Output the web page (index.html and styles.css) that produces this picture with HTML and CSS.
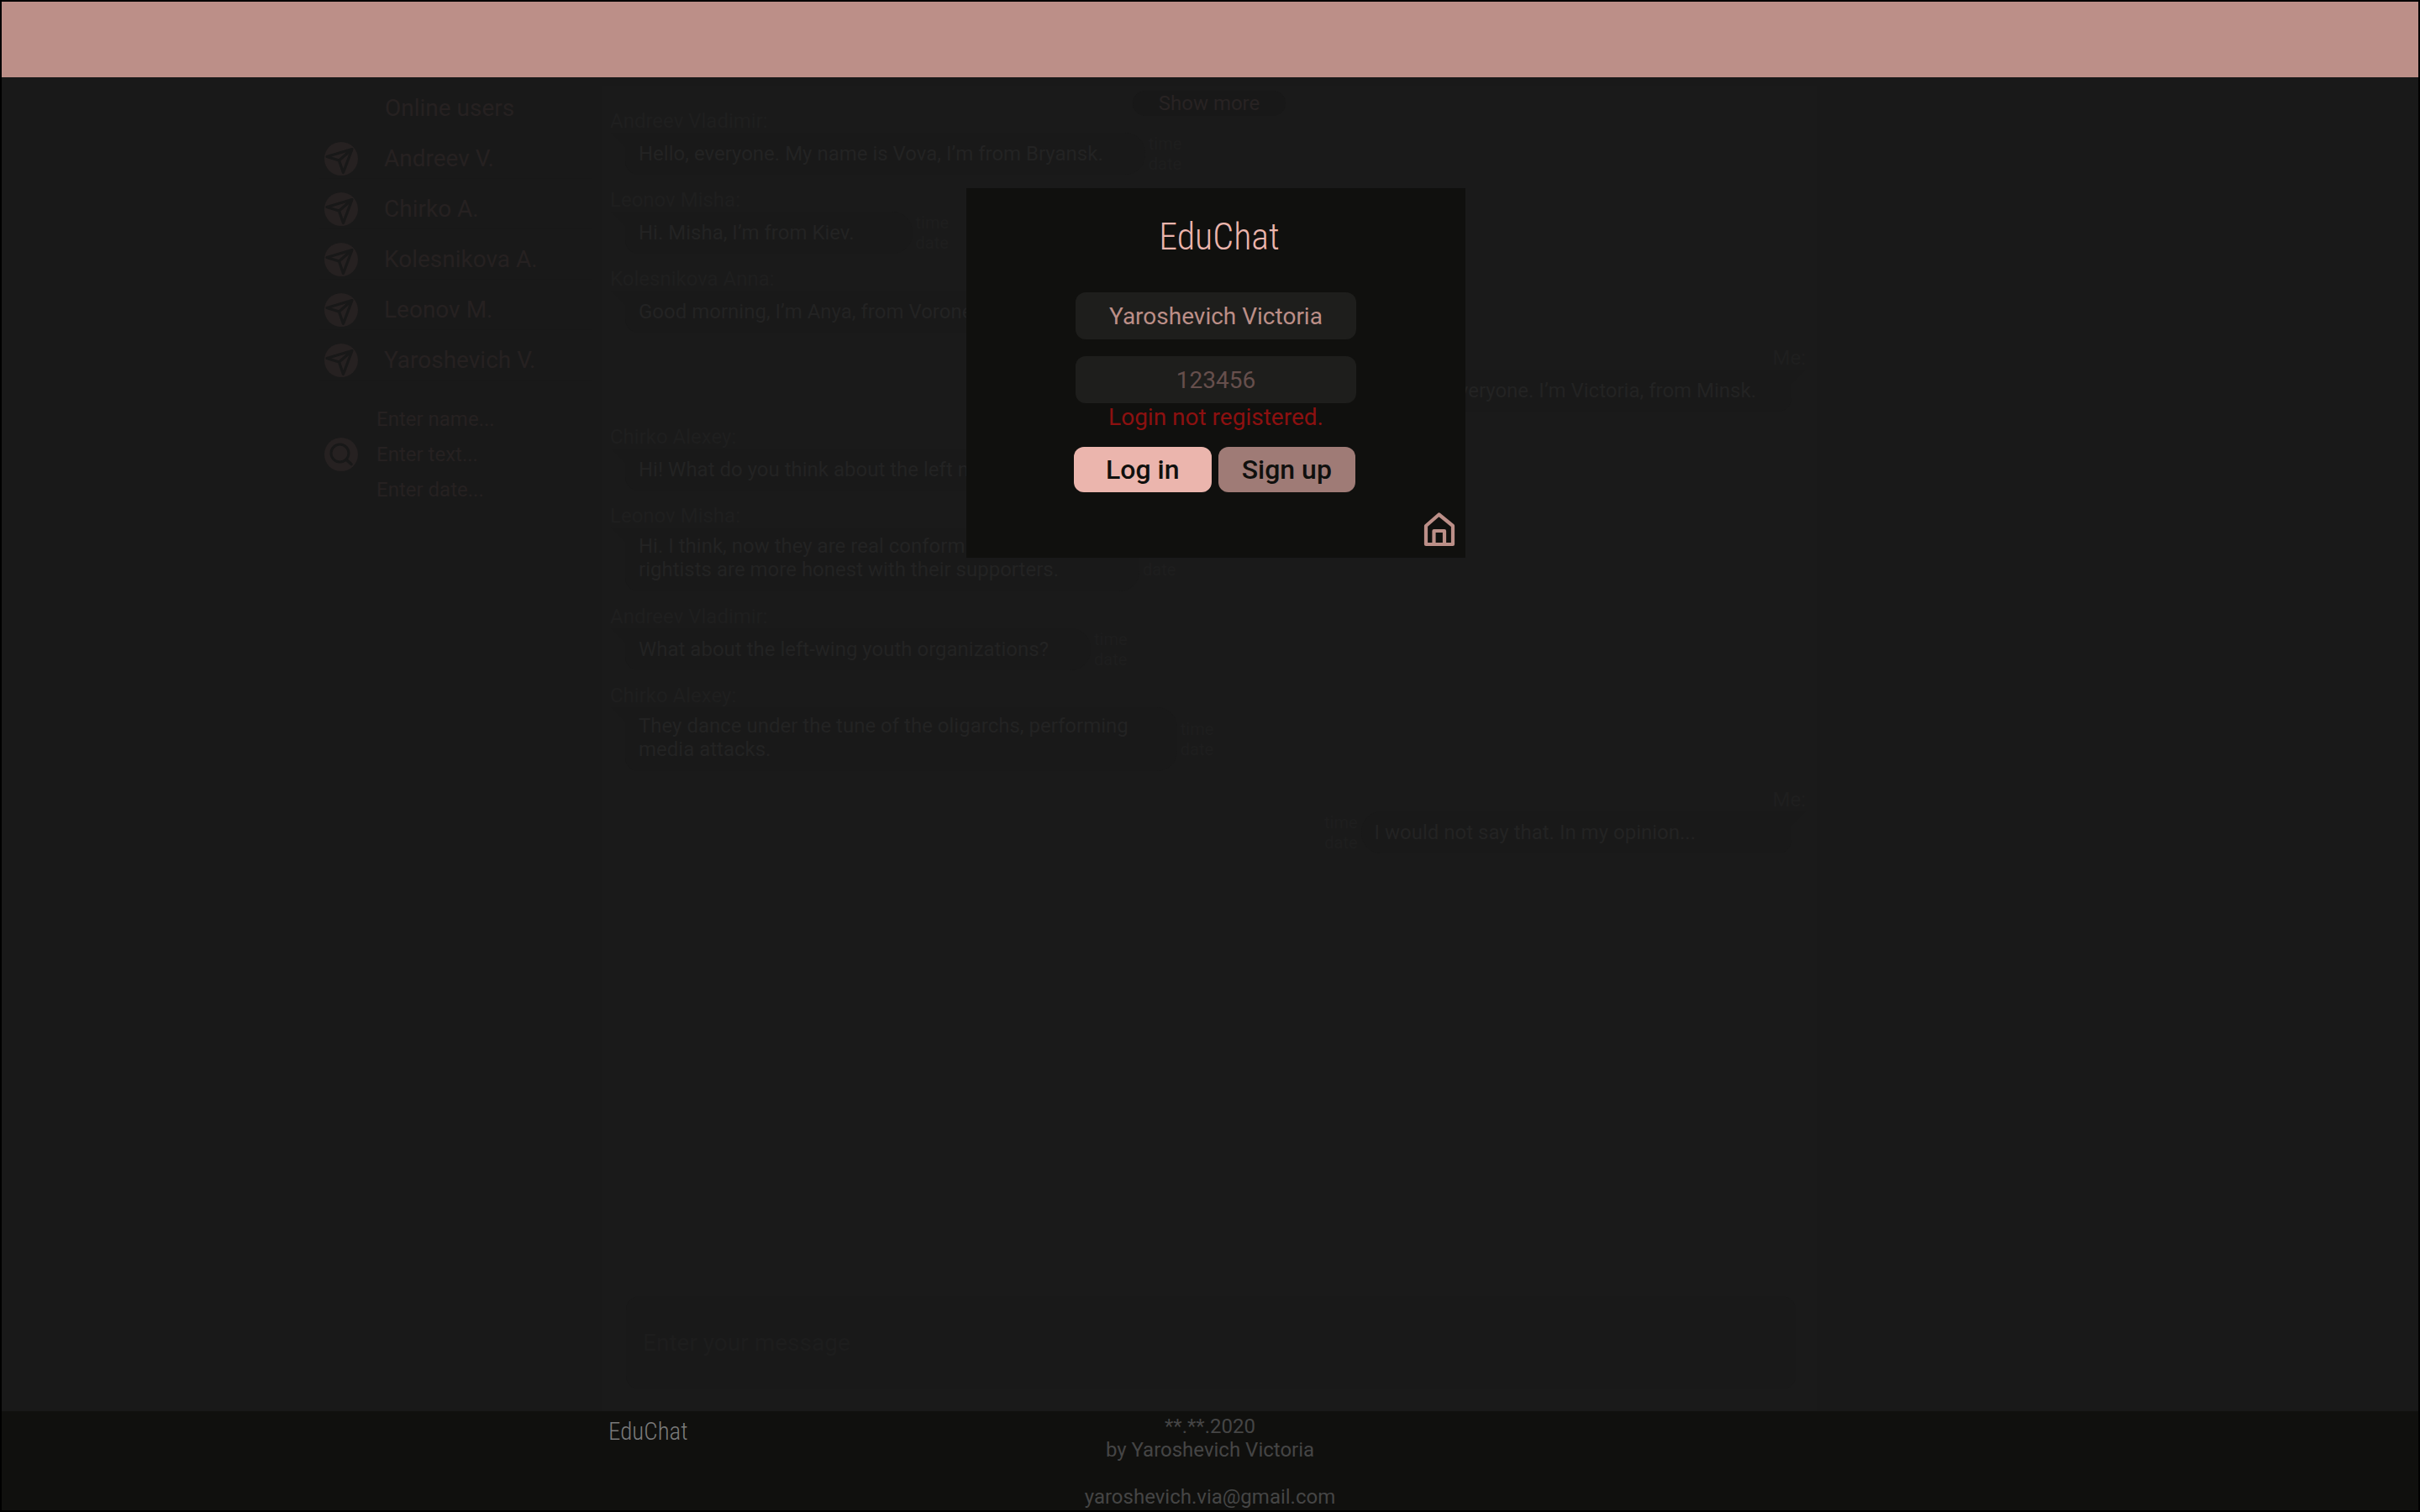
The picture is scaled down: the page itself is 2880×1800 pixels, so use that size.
FILE: index.html
```html
<!DOCTYPE html>
<html lang="en">
<head>
<meta charset="utf-8">
<meta name="viewport" content="width=device-width, initial-scale=1">
<title>EduChat</title>
<link rel="stylesheet" href="styles.css">
</head>
<body>
<svg class="symbols">
  <symbol id="plane" viewBox="0 0 40 40"><circle cx="20" cy="20" r="20" fill="currentColor"/><path d="M33 8.500 3 17.500 17.500 22 22.500 36.500ZM17.500 22 33 8.500" fill="none" stroke="#181818" stroke-width="3.200" stroke-linejoin="round"/></symbol>
  <symbol id="search" viewBox="0 0 40 40"><circle cx="20" cy="20" r="20" fill="currentColor"/><circle cx="18.500" cy="18.500" r="10.500" fill="none" stroke="#181818" stroke-width="3"/><path d="m26.500 26.500 5.500 5" fill="none" stroke="#181818" stroke-width="3.500" stroke-linecap="round"/></symbol>
</svg>
<div class="page">
  <header class="topbar"></header>
  <main class="main">
    <aside class="sidebar">
      <h2 class="sidebar-title">Online users</h2>
      <ul class="users">
        <li class="user"><svg class="round-icon"><use href="#plane"/></svg>Andreev V.</li>
        <li class="user"><svg class="round-icon"><use href="#plane"/></svg>Chirko A.</li>
        <li class="user"><svg class="round-icon"><use href="#plane"/></svg>Kolesnikova A.</li>
        <li class="user"><svg class="round-icon"><use href="#plane"/></svg>Leonov M.</li>
        <li class="user"><svg class="round-icon"><use href="#plane"/></svg>Yaroshevich V.</li>
      </ul>
      <form class="search">
        <button class="search-button" type="button" aria-label="Search"><svg class="round-icon"><use href="#search"/></svg></button>
        <div class="search-fields">
          <input class="search-input" type="text" aria-label="Name" placeholder="Enter name...">
          <input class="search-input" type="text" aria-label="Text" placeholder="Enter text...">
          <input class="search-input" type="text" aria-label="Date" placeholder="Enter date...">
        </div>
      </form>
    </aside>
    <section class="chat">
      <button class="show-more" type="button">Show more</button>
      <div class="messages">
        <article class="message"><h3 class="author">Andreev Vladimir:</h3><div class="line"><p class="bubble">Hello, everyone. My name is Vova, I’m from Bryansk.</p><div class="stamp">time<br>date</div></div></article>
        <article class="message"><h3 class="author">Leonov Misha:</h3><div class="line"><p class="bubble roomy">Hi. Misha, I’m from Kiev.</p><div class="stamp">time<br>date</div></div></article>
        <article class="message"><h3 class="author">Kolesnikova Anna:</h3><div class="line"><p class="bubble">Good morning, I’m Anya, from Voronezh.</p><div class="stamp">time<br>date</div></div></article>
        <article class="message mine"><h3 class="author">Me:</h3><div class="line"><p class="bubble">Hello, everyone. I’m Victoria, from Minsk.</p><div class="stamp">time<br>date</div></div></article>
        <article class="message"><h3 class="author">Chirko Alexey:</h3><div class="line"><p class="bubble">Hi! What do you think about the left now?</p><div class="stamp">time<br>date</div></div></article>
        <article class="message"><h3 class="author">Leonov Misha:</h3><div class="line"><p class="bubble tall wide">Hi. I think, now they are real conformists,<br>rightists are more honest with their supporters.</p><div class="stamp">time<br>date</div></div></article>
        <article class="message"><h3 class="author">Andreev Vladimir:</h3><div class="line"><p class="bubble">What about the left-wing youth organizations?</p><div class="stamp">time<br>date</div></div></article>
        <article class="message"><h3 class="author">Chirko Alexey:</h3><div class="line"><p class="bubble tall">They dance under the tune of the oligarchs, performing<br>media attacks.</p><div class="stamp">time<br>date</div></div></article>
        <article class="message mine latest"><h3 class="author">Me:</h3><div class="line"><p class="bubble open">I would not say that. In my opinion...</p><div class="stamp">time<br>date</div></div></article>
      </div>
      <input class="compose" type="text" aria-label="Message" placeholder="Enter your message">
    </section>
  </main>
  <footer class="footer">
    <div class="footer-logo">EduChat</div>
    <div class="credits">**.**.2020<br>by Yaroshevich Victoria<br><br><a class="mail" href="mailto:yaroshevich.via@gmail.com">yaroshevich.via@gmail.com</a></div>
  </footer>
</div>
<div class="dialog" role="dialog" aria-label="Log in to EduChat">
  <h1 class="logo">EduChat</h1>
  <form class="login">
    <input class="field" type="text" aria-label="Login" value="Yaroshevich Victoria">
    <input class="field" type="text" aria-label="Password" placeholder="123456">
    <p class="error">Login not registered.</p>
    <div class="actions">
      <button class="button primary" type="button">Log in</button>
      <button class="button" type="button">Sign up</button>
    </div>
  </form>
  <a class="home" href="#" aria-label="Home"><svg class="home-icon" viewBox="0 0 38 42"><path d="M3 17 18.500 3.500 35 17V39H3ZM12.500 39V23H25V39" fill="none" stroke="currentColor" stroke-width="4.200" stroke-linejoin="round"/></svg></a>
</div>
</body>
</html>
```
FILE: styles.css
```css
* { box-sizing: border-box; }
body, h1, h2, h3, p, ul { margin: 0; padding: 0; font-weight: 400; }
body { background: #191919; font: 24px/28px Roboto, sans-serif; color: #232323; }
input, button { font: inherit; color: inherit; border: 0; background: none; padding: 0; min-width: 0; }
input::placeholder { color: inherit; opacity: 1; }
.symbols { display: none; }

.page { display: flex; flex-direction: column; min-height: 100vh; border: 2px solid #000; }
.topbar { height: 90px; background: #bc8f88; }
.main { flex: 1; display: grid; grid-template-columns: 378fr minmax(0, 336fr) minmax(0, 1446fr) 716fr; }

.sidebar { grid-column: 2; margin-right: 12px; padding-top: 1px; font-size: 28px; line-height: 48px; color: #262121; }
.sidebar-title { padding: 12px 0 0 78px; font-size: 28px; }
.users { list-style: none; }
.user { display: flex; align-items: center; gap: 31px; height: 60px; padding: 12px 0 0 6px; border-bottom: 1px solid #181818; }
.round-icon { display: block; width: 40px; height: 40px; }
.search { display: flex; align-items: center; gap: 22px; margin-top: 25px; padding-left: 6px; }
.search-fields { flex: 1; min-width: 0; display: flex; flex-direction: column; }
.search-input { height: 42px; font-size: 24px; }

.chat { grid-column: 3; display: flex; flex-direction: column; margin-top: 10px; padding: 6px 0 26px; background: #1a1a1a; }
.show-more { align-self: center; width: 182px; height: 30px; border-radius: 15px; background: #181818; color: #282323; }
.messages { flex: 1; display: flex; flex-direction: column; gap: 16px; margin-top: -8px; padding: 0 13px 0 10px; }
.author { font-size: 24px; color: #1f1f1f; }
.line { display: flex; align-items: center; gap: 4px; margin-left: 18px; }
.bubble { position: relative; padding: 11px 50px 11px 16px; border-radius: 0 24px 24px 16px; background: #191919; }
.bubble::before { content: ""; position: absolute; top: 0; right: 100%; width: 17px; height: 17px; background: #191919; clip-path: polygon(0 0, 100% 0, 100% 100%); }
.roomy { padding-right: 69px; }
.tall { padding: 8px 58px 12px 16px; }
.wide { padding-right: 96px; }
.stamp { font-size: 20px; line-height: 24px; color: #1e1e1e; }
.mine { text-align: right; }
.mine .line { flex-direction: row-reverse; margin: 0 17px 0 0; }
.mine .bubble { padding-right: 42px; border-radius: 24px 0 16px 24px; }
.mine .bubble::before { right: auto; left: 100%; clip-path: polygon(0 0, 100% 0, 0 100%); }
.mine .open { padding-right: 114px; }
.latest { margin-top: 4px; }
.compose { height: 111px; margin: 0 25px 0 29px; padding: 0 20px; border-radius: 16px; background: #191919; font-size: 28px; color: #1d1d1d; }

.footer { display: grid; grid-template-columns: 722fr 1432fr 722fr; padding: 4px 0 2px; background: #10100e; color: #454545; }
.footer-logo { grid-area: 1 / 2; padding-top: 4px; font: 300 29px/32px "Roboto Condensed", "Liberation Sans Narrow", Lato, sans-serif; color: #7a7a7a; }
.credits { grid-area: 1 / 1 / 2 / -1; text-align: center; }
.mail { color: inherit; text-decoration: none; }

.dialog { position: absolute; top: 224px; left: calc(50% - 290px); width: 594px; height: 440px; padding: 28px 0 0; display: flex; flex-direction: column; align-items: center; background: #10100e; }
.logo { padding-left: 8px; font: 300 44px/60px "Roboto Condensed", "Liberation Sans Narrow", Lato, sans-serif; color: #ebb5ad; }
.login { display: flex; flex-direction: column; width: 334px; margin-top: 36px; font-size: 28px; }
.field { height: 56px; margin-bottom: 20px; border-radius: 12px; background: #1e1e1c; text-align: center; color: #bc8f88; }
.field::placeholder { color: #664f4c; }
.error { margin-top: -20px; line-height: 34px; text-align: center; color: #8c1010; }
.actions { display: flex; gap: 8px; margin: 18px 1px 0 -2px; }
.button { flex: 1; height: 54px; border-radius: 12px; background: #9f7b76; color: #10100e; font-size: 32px; font-weight: 500; }
.primary { background: #ebb5ad; }
.home { position: absolute; right: 12px; bottom: 13px; color: #bc8f88; }
.home-icon { display: block; width: 38px; height: 42px; }
```
